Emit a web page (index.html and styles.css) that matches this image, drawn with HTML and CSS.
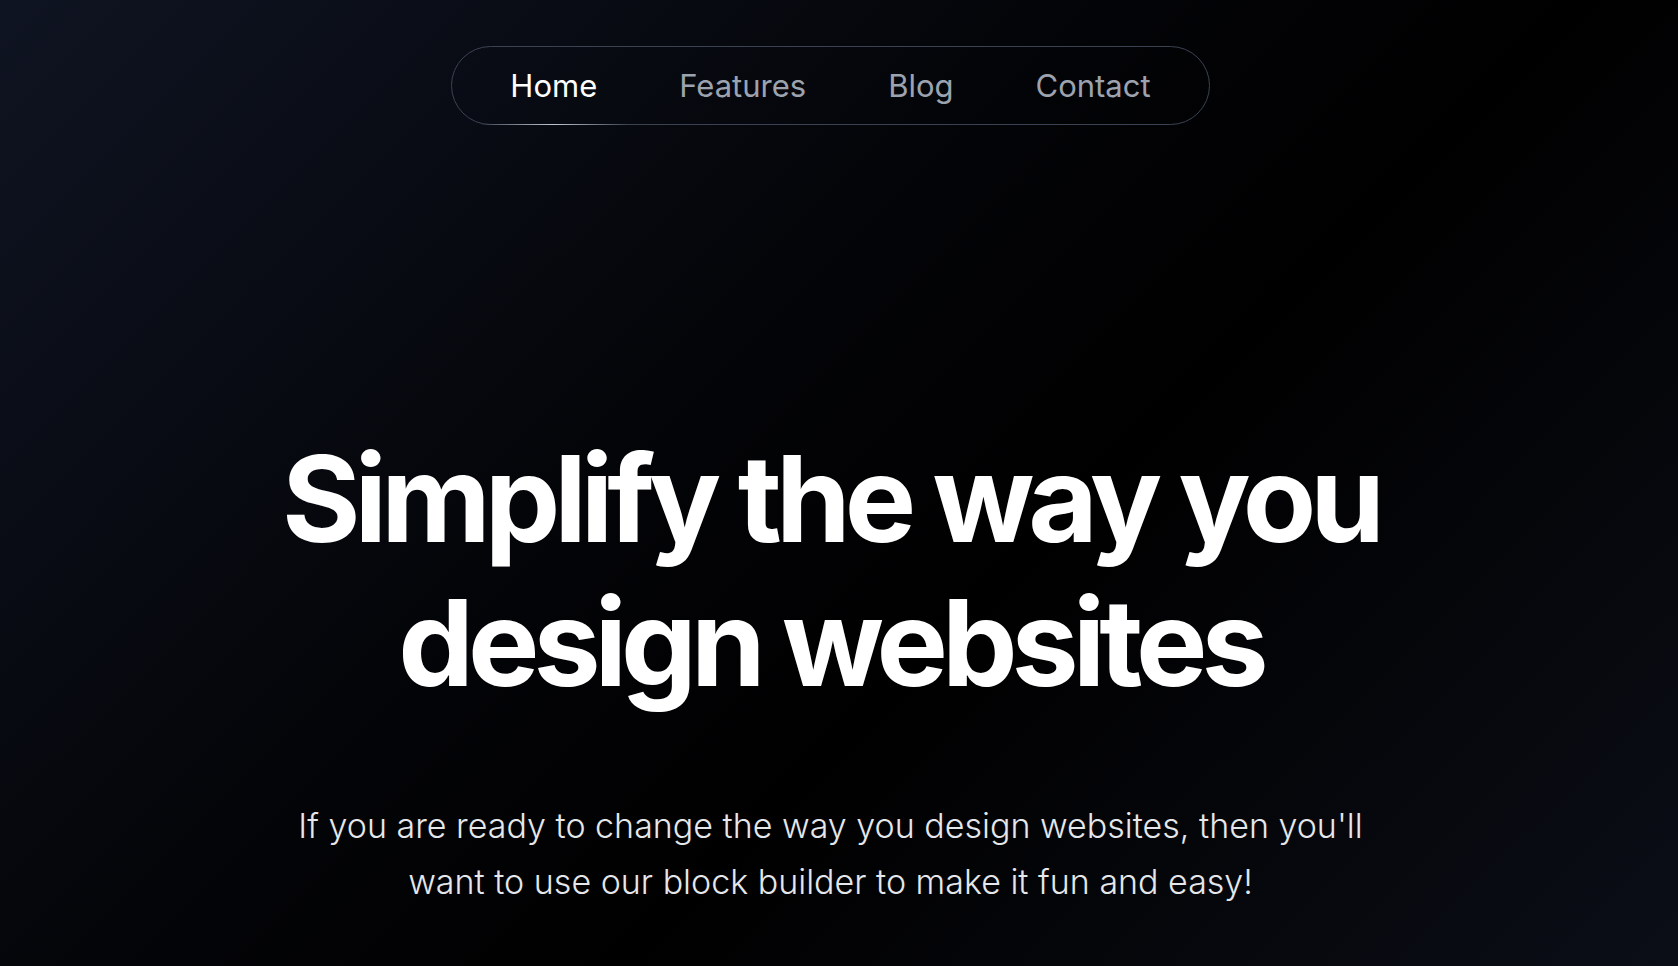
FILE: index.html
```html
<!doctype html>
<html lang="en">
  <head>
    <meta charset="UTF-8" />
    <meta name="viewport" content="width=device-width, initial-scale=1.0" />
    <title>Block Builder</title>
    <link rel="stylesheet" href="styles.css">
  </head>
  <body>
    <header class="topbar">
      <nav class="nav">
        <a href="#" class="nav-link active">Home</a>
        <a href="#" class="nav-link">Features</a>
        <a href="#" class="nav-link">Blog</a>
        <a href="#" class="nav-link">Contact</a>
      </nav>
    </header>

    <main class="hero">
      <h1>Simplify the way you design websites</h1>
      <p>
        If you are ready to change the way you design websites, then you'll
        want to use our block builder to make it fun and easy!
      </p>
    </main>
  </body>
</html>
```

FILE: styles.css
```css
:root {
  --text: #ffffff;
  --text-muted: #9ca3af;
  --text-soft: #e5e7eb;
  --border: #3b4252;
}

* {
  margin: 0;
  padding: 0;
  box-sizing: border-box;
}

html,
body {
  height: 100%;
}

body {
  font-family: Inter, "Noto Sans", sans-serif;
  background: linear-gradient(
    135deg,
    #0f1422 0%,
    #030407 42%,
    #000000 60%,
    #0b0e17 100%
  );
  color: var(--text);
  /* leaves room like the scrollbar gutter of the original page */
  padding-right: 17px;
  overflow: hidden;
}

.topbar {
  display: flex;
  justify-content: center;
  padding-top: 46px;
}

.nav {
  display: flex;
  align-items: center;
  height: 79px;
  padding: 0 17px;
  border: 1px solid var(--border);
  border-radius: 40px;
}

.nav-link {
  position: relative;
  padding: 0 41px;
  font-size: 31px;
  line-height: 77px;
  color: var(--text-muted);
  text-decoration: none;
}

.nav-link.active {
  color: var(--text);
}

.nav-link.active::after {
  content: "";
  position: absolute;
  left: 10px;
  right: 10px;
  bottom: -1px;
  height: 1px;
  background: linear-gradient(
    90deg,
    rgba(203, 213, 225, 0) 0%,
    rgba(203, 213, 225, 0.9) 50%,
    rgba(203, 213, 225, 0) 100%
  );
}

.hero {
  display: flex;
  flex-direction: column;
  align-items: center;
  text-align: center;
  margin-top: 302px;
}

h1 {
  max-width: 1140px;
  font-size: 120px;
  font-weight: 700;
  line-height: 144px;
  letter-spacing: -0.05em;
}

p {
  max-width: 1100px;
  margin-top: 83px;
  font-size: 34px;
  font-weight: 300;
  line-height: 56px;
  color: var(--text-soft);
}
```
